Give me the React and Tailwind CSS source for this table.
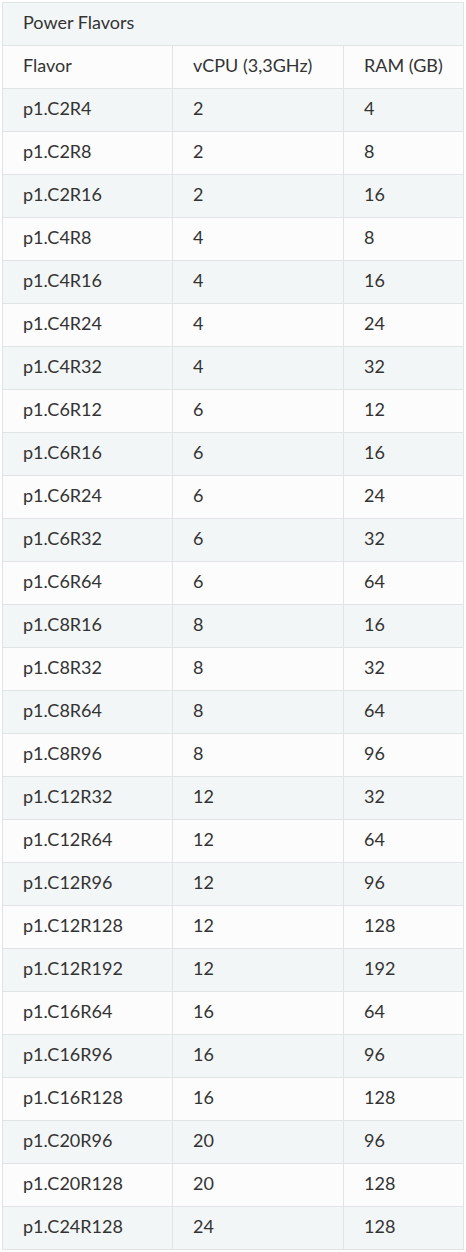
const flavors = [
  ["p1.C2R4", "2", "4"],
  ["p1.C2R8", "2", "8"],
  ["p1.C2R16", "2", "16"],
  ["p1.C4R8", "4", "8"],
  ["p1.C4R16", "4", "16"],
  ["p1.C4R24", "4", "24"],
  ["p1.C4R32", "4", "32"],
  ["p1.C6R12", "6", "12"],
  ["p1.C6R16", "6", "16"],
  ["p1.C6R24", "6", "24"],
  ["p1.C6R32", "6", "32"],
  ["p1.C6R64", "6", "64"],
  ["p1.C8R16", "8", "16"],
  ["p1.C8R32", "8", "32"],
  ["p1.C8R64", "8", "64"],
  ["p1.C8R96", "8", "96"],
  ["p1.C12R32", "12", "32"],
  ["p1.C12R64", "12", "64"],
  ["p1.C12R96", "12", "96"],
  ["p1.C12R128", "12", "128"],
  ["p1.C12R192", "12", "192"],
  ["p1.C16R64", "16", "64"],
  ["p1.C16R96", "16", "96"],
  ["p1.C16R128", "16", "128"],
  ["p1.C20R96", "20", "96"],
  ["p1.C20R128", "20", "128"],
  ["p1.C24R128", "24", "128"],
];

const cell = "h-[43px] border border-[#e1e4e5] px-5 pt-0 pb-1 text-left align-middle font-normal";

export default function App() {
  return (
    <div className="bg-white pl-[2px] pt-[2px] font-['Lato','Open_Sans',sans-serif] text-[18px] text-[#333]">
      <table className="w-[462px] table-fixed border-collapse">
        <colgroup>
          <col className="w-[170px]" />
          <col className="w-[171px]" />
          <col />
        </colgroup>
        <thead>
          <tr className="bg-[#f3f6f6]">
            <th colSpan={3} className={cell}>
              Power Flavors
            </th>
          </tr>
          <tr className="bg-[#fcfcfc]">
            <th className={cell}>Flavor</th>
            <th className={cell}>vCPU (3,3GHz)</th>
            <th className={cell}>RAM (GB)</th>
          </tr>
        </thead>
        <tbody>
          {flavors.map(([name, cpu, ram], index) => (
            <tr key={name} className={index % 2 === 0 ? "bg-[#f3f6f6]" : "bg-[#fcfcfc]"}>
              <td className={cell}>{name}</td>
              <td className={cell}>{cpu}</td>
              <td className={cell}>{ram}</td>
            </tr>
          ))}
        </tbody>
      </table>
    </div>
  );
}
